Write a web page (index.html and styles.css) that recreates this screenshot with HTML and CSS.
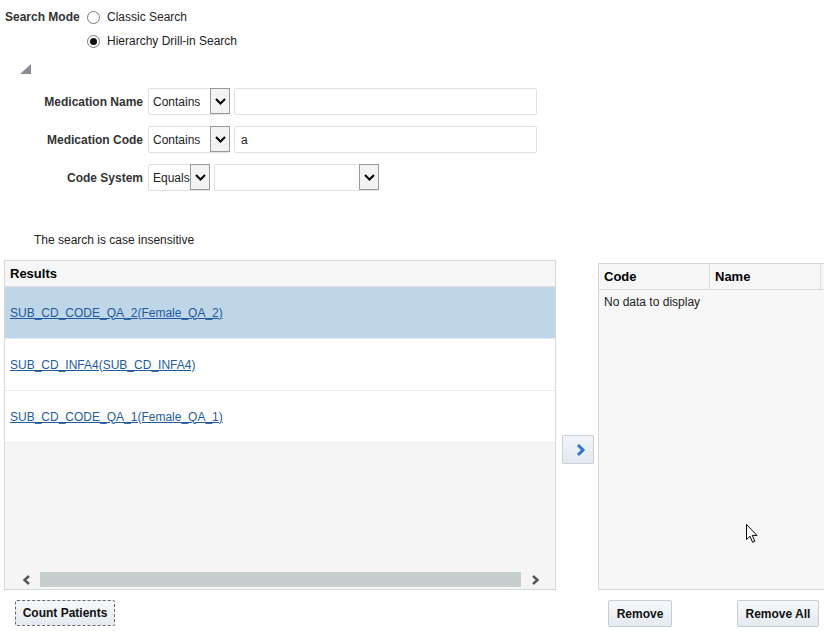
FILE: index.html
```html
<!DOCTYPE html>
<html>
<head>
<meta charset="utf-8">
<link rel="stylesheet" href="styles.css">
</head>
<body>
<div class="page">
  <div class="mode">
    <span class="mode-label">Search Mode</span>
    <div class="radios">
      <div class="radio"><span class="dot"></span><span>Classic Search</span></div>
      <div class="radio"><span class="dot on"></span><span>Hierarchy Drill-in Search</span></div>
    </div>
  </div>

  <div class="disclosure">
    <svg width="11" height="10" viewBox="0 0 11 10"><polygon points="11,0 11,10 0,10" fill="#8a8f94"/></svg>
  </div>

  <div class="form">
    <div class="row">
      <span class="lbl">Medication Name</span>
      <div class="sel sel-op"><span class="val">Contains</span><span class="btn"><svg width="11" height="7" viewBox="0 0 11 7"><polyline points="1,1 5.5,5.5 10,1" fill="none" stroke="#000" stroke-width="2"/></svg></span></div>
      <div class="input"></div>
    </div>
    <div class="row">
      <span class="lbl">Medication Code</span>
      <div class="sel sel-op"><span class="val">Contains</span><span class="btn"><svg width="11" height="7" viewBox="0 0 11 7"><polyline points="1,1 5.5,5.5 10,1" fill="none" stroke="#000" stroke-width="2"/></svg></span></div>
      <div class="input"><span class="val">a</span></div>
    </div>
    <div class="row">
      <span class="lbl">Code System</span>
      <div class="sel sel-eq"><span class="val">Equals</span><span class="btn"><svg width="11" height="7" viewBox="0 0 11 7"><polyline points="1,1 5.5,5.5 10,1" fill="none" stroke="#000" stroke-width="2"/></svg></span></div>
      <div class="sel sel-sys"><span class="val"></span><span class="btn"><svg width="11" height="7" viewBox="0 0 11 7"><polyline points="1,1 5.5,5.5 10,1" fill="none" stroke="#000" stroke-width="2"/></svg></span></div>
    </div>
  </div>

  <p class="note">The search is case insensitive</p>

  <div class="main">
    <div class="results">
      <div class="res-head">Results</div>
      <div class="res-row selected"><a href="#">SUB_CD_CODE_QA_2(Female_QA_2)</a></div>
      <div class="res-row"><a href="#">SUB_CD_INFA4(SUB_CD_INFA4)</a></div>
      <div class="res-row"><a href="#">SUB_CD_CODE_QA_1(Female_QA_1)</a></div>
      <div class="res-fill"></div>
      <div class="scroll">
        <svg class="sarrow" width="9" height="10" viewBox="0 0 9 10"><polyline points="7,1 2.5,5 7,9" fill="none" stroke="#555" stroke-width="2.4"/></svg>
        <div class="track"></div>
        <svg class="sarrow" width="9" height="10" viewBox="0 0 9 10"><polyline points="2,1 6.5,5 2,9" fill="none" stroke="#555" stroke-width="2.4"/></svg>
      </div>
    </div>

    <div class="shuttle">
      <div class="move-btn">
        <svg width="12" height="14" viewBox="0 0 12 14"><polyline points="3,2 8,7 3,12" fill="none" stroke="#2f78cf" stroke-width="3"/></svg>
      </div>
    </div>

    <div class="selected-panel">
      <div class="sp-head">
        <span class="col c1">Code</span>
        <span class="col c2">Name</span>
        <span class="col c3"></span>
      </div>
      <div class="sp-body">No data to display</div>
    </div>
  </div>

  <div class="actions">
    <div class="act-left"><button class="b count">Count Patients</button></div>
    <div class="act-right">
      <button class="b rm">Remove</button>
      <button class="b rma">Remove All</button>
    </div>
  </div>

  <svg class="cursor" width="13" height="20" viewBox="0 0 13 20"><path d="M0.5,0.5 L0.5,15.5 L4,12.2 L6.6,18.3 L8.8,17.3 L6.3,11.4 L11,11.4 Z" fill="#fff" stroke="#000" stroke-width="1"/></svg>
</div>
</body>
</html>
```

FILE: styles.css
```css
* { box-sizing: border-box; }
html, body { margin: 0; padding: 0; overflow: hidden; }
body {
  width: 824px;
  height: 631px;
  background: #fff;
  font-family: "Liberation Sans", Arial, sans-serif;
  font-size: 12px;
  color: #222;
}
.page { position: relative; width: 824px; height: 631px; overflow: hidden; }

.mode { display: flex; padding: 5px 0 0 5px; }
.mode-label { font-weight: bold; color: #333; line-height: 24px; width: 82px; }
.radios { display: flex; flex-direction: column; }
.radio { display: flex; align-items: center; height: 24px; color: #222; }
.dot {
  width: 13px; height: 13px; border-radius: 50%;
  border: 1px solid #7a7a7a; background: #fff;
  margin-right: 7px; display: flex; align-items: center; justify-content: center;
}
.dot.on::after { content: ""; width: 7px; height: 7px; border-radius: 50%; background: #111; }

.disclosure { padding-left: 20px; margin-top: 11px; height: 10px; }
.disclosure svg { display: block; }

.form { margin-top: 14px; display: flex; flex-direction: column; gap: 11px; }
.row { display: flex; align-items: center; height: 27px; gap: 4px; }
.lbl { width: 143px; text-align: right; font-weight: bold; color: #333; margin-right: 1px; flex: none; }
.sel {
  height: 27px; border: 1px solid #dbe3e6; border-radius: 2px; flex: none;
  display: flex; align-items: center; justify-content: space-between; background: #fff;
}
.sel .val { padding-left: 4px; color: #222; }
.sel .btn {
  width: 20px; height: 26px; border: 1px solid #9a9a9a; background: #f3f3f3;
  display: flex; align-items: center; justify-content: center; margin-top: -1px; margin-right: -1px;
  align-self: flex-start;
}
.sel-op { width: 82px; }
.sel-eq { width: 62px; }
.sel-sys { width: 165px; }
.input {
  width: 303px; height: 27px; border: 1px solid #dbe3e6; border-radius: 2px; flex: none;
  display: flex; align-items: center; background: #fff;
}
.input .val { padding-left: 6px; }

.note { margin: 42px 0 0 34px; line-height: 14px; color: #222; }

.main { display: flex; margin-top: 13px; height: 330px; }
.results {
  margin-left: 4px; width: 552px; height: 330px; flex: none;
  border: 1px solid #d5d7dc; display: flex; flex-direction: column; background: #f5f5f5;
}
.res-head {
  height: 26px; flex: none; display: flex; align-items: center; padding-left: 5px;
  font-weight: bold; font-size: 13px; color: #000; background: #f6f6f6;
  border-bottom: 1px solid #dcdde2;
}
.res-row {
  height: 52px; flex: none; display: flex; align-items: center; padding-left: 5px;
  background: #fff; border-bottom: 1px solid #ebebf0;
}
.res-row.selected { background: #bfd5e8; border-bottom-color: #e6ebf0; }
.res-row a { color: #1f5b9c; text-decoration: underline; }
.res-fill { flex: 1; }
.scroll { height: 17px; flex: none; margin-bottom: 1px; display: flex; align-items: center; padding: 0 15px 0 17px; }
.sarrow { display: block; flex: none; }
.track { flex: 1; height: 15px; background: #c6cecd; margin: 0 10px 0 9px; }

.shuttle { width: 42px; flex: none; padding-left: 6px; }
.move-btn {
  margin-top: 175px; width: 32px; height: 29px; border: 1px solid #c8d0d8; border-radius: 2px;
  background: linear-gradient(#f1f5fa, #e2e8f0);
  display: flex; align-items: center; justify-content: center; padding-left: 6px;
}
.move-btn svg { display: block; }

.selected-panel {
  margin-top: 3px; width: 240px; height: 327px; flex: none;
  border: 1px solid #d5d7dc; background: #f7f7f7; display: flex; flex-direction: column;
}
.sp-head { display: flex; height: 26px; flex: none; background: #f6f6f6; border-bottom: 1px solid #dcdde2; }
.col { display: flex; align-items: center; padding-left: 5px; font-weight: bold; font-size: 13px; color: #000; }
.c1 { width: 111px; border-right: 1px solid #dcdde2; }
.c2 { width: 111px; border-right: 1px solid #dcdde2; }
.c3 { flex: 1; }
.sp-body { padding: 5px 0 0 5px; color: #222; line-height: 14px; }

.actions { display: flex; margin-top: 10px; }
.act-left { width: 608px; padding-left: 15px; flex: none; }
.act-right { display: flex; gap: 65px; }
.b {
  font-family: "Liberation Sans", Arial, sans-serif; font-size: 12px; font-weight: bold; color: #111;
  height: 27px; padding: 0; border: 1px solid #c6cdd5; border-radius: 2px; white-space: nowrap;
  background: linear-gradient(#f6f8fb, #e4eaf1); margin: 0; cursor: default; flex: none;
}
.b.count { width: 100px; height: 26px; border: 1px dashed #6a6a6a; }
.b.rm { width: 64px; }
.b.rma { width: 82px; }

.cursor { position: absolute; left: 746px; top: 524px; }
```
